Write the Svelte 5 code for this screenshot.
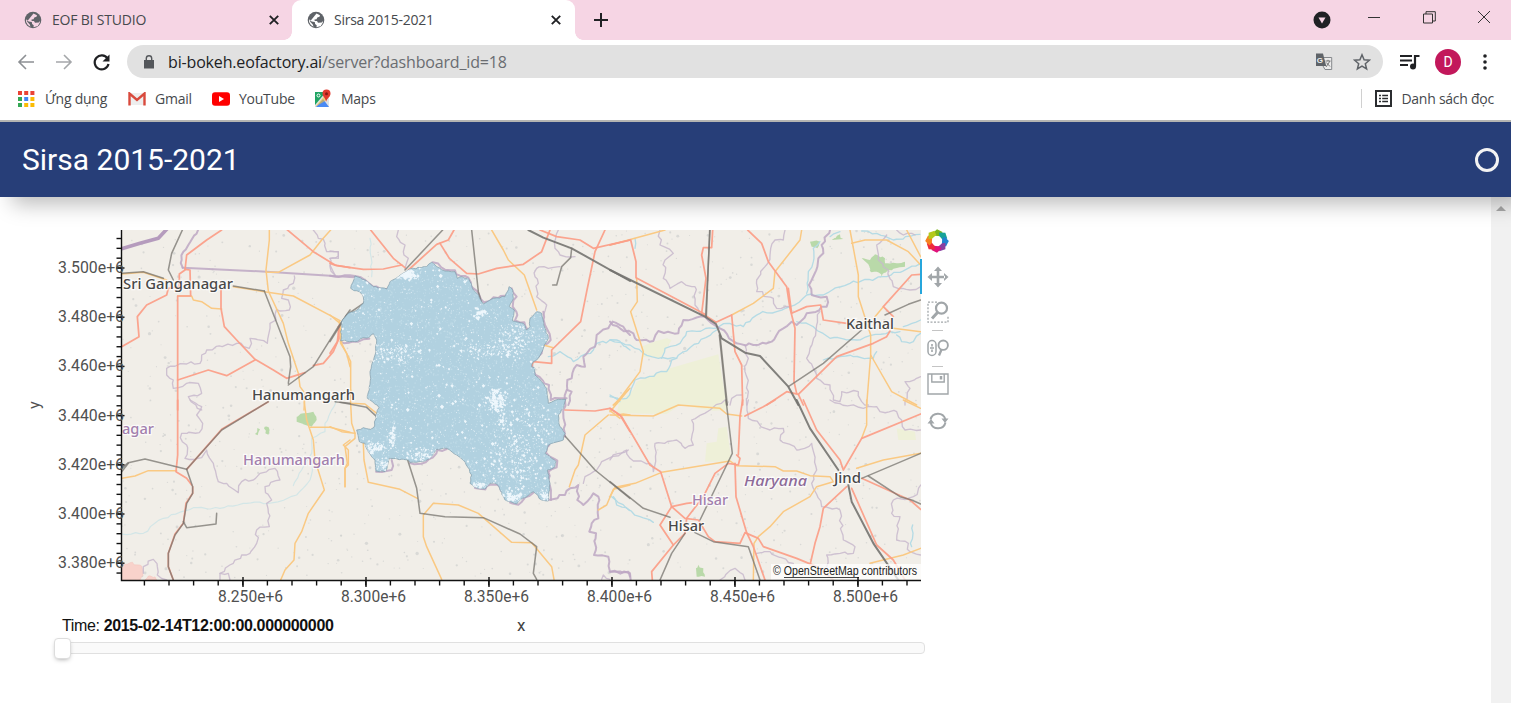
<script>
  let seed = 7;
  function rnd() {
    seed = (seed * 16807) % 2147483647;
    return seed / 2147483647;
  }

  // Breaks each segment into short jittered pieces, for borders and rivers.
  function rough(d, amp, step = 14) {
    const pts = d.split(' ').map((s) => s.split(',').map(Number));
    const out = [pts[0]];
    for (let i = 1; i < pts.length; i++) {
      const [x0, y0] = pts[i - 1];
      const [x1, y1] = pts[i];
      const n = Math.max(1, Math.round(Math.hypot(x1 - x0, y1 - y0) / step));
      for (let j = 1; j < n; j++) {
        out.push([
          x0 + ((x1 - x0) * j) / n + (rnd() - 0.5) * amp,
          y0 + ((y1 - y0) * j) / n + (rnd() - 0.5) * amp
        ]);
      }
      out.push([x1, y1]);
    }
    return out.map((p) => p[0].toFixed(1) + ',' + p[1].toFixed(1)).join(' ');
  }

  const order = ['area', 'park', 'town', 'stream', 'water', 'border', 'strong', 'state', 'minor', 'major', 'rail', 'main'];
  const tiles = [
    { x: 20, y: 220, l: {
      state: ['305,86 360,70 415,55 440,28'],
      rail: ['488,28 455,100 445,150 460,180', '733,213 810,410 812,440 805,490', '990,270 955,320 880,440 805,495', '945,545 990,550', '305,160 370,155 430,175', '640,198 733,213'],
      strong: ['535,28 505,75 490,95 485,120 488,143', '488,143 740,155 990,171 1005,172'],
      border: ['880,30 895,55 915,70 920,95 955,95 955,108 930,115 930,140 945,165', '823,168 820,190 790,210 785,235 805,240 808,270 770,268 768,300 750,310 742,370 690,355 688,385 650,370 560,390 545,405 540,430 500,432 440,445 440,465 460,480 460,505 500,490 535,490 545,520 505,530 545,570'],
      major: ['605,30 560,60 500,105 495,150 478,162 478,200 445,205 440,225 380,255 352,290 357,350 305,380', '495,148 510,150 512,228 473,228 473,570', '603,205 603,265 613,320 650,360 705,418 760,450 800,475 855,458', '473,480 565,450 620,467 705,420', '800,28 880,95 945,135 990,143', '880,437 910,430 940,395 957,355 955,320'],
      minor: ['473,228 515,228 520,240 545,245 575,265 605,267', '305,162 370,157 440,180', '640,200 733,215 820,228 960,302', '748,28 748,60 738,150 745,213 790,310 805,370 835,460 840,500 855,520 852,570', '738,157 775,157 870,105 905,60 932,30', '958,302 962,370 980,400 990,440']
    } },
    { x: 20, y: 400, l: {
      border: ['510,0 545,20 530,45 548,70 538,98 485,100 487,125 500,135 495,175 545,173 560,150 580,190 595,245 620,250 655,278 665,245 700,240 720,220 765,205 780,240 735,260 755,300 740,310 748,380 710,390 710,430 690,460 665,465 640,490 600,520 600,540', '600,520 625,520 630,540', '370,520 370,500 400,478 412,500 412,525 440,540'],
      major: ['473,0 473,165 468,215 500,235 515,255', '745,5 605,88 500,208', '518,260 518,280 498,310 490,370 465,402 445,460 445,500 460,540'],
      rail: ['745,5 605,90 500,208 518,260 518,280 500,310 490,370 465,405 445,460 445,500 460,540', '305,205 325,188 375,177 500,208', '305,215 325,190', '490,365 500,383 588,372 590,340'],
      minor: ['305,235 345,228 385,212 470,212', '852,0 860,60 880,120 885,180 913,270 865,340 845,395 825,430 822,480 795,510 782,540', '870,82 930,82 990,97', '990,120 970,135 985,150 985,195 975,205 975,260'],
      stream: ['950,0 915,70 915,95 875,115 875,160 845,210 820,257', '305,402 370,400 430,355 520,323 600,325 680,310 760,308 830,285 870,240 880,180'],
      park: ['830,50 850,40 880,35 890,60 875,80 830,65', '705,102 712,84 720,88 713,106', '736,100 734,80 746,82 745,104'],
      town: ['305,495 330,488 360,495 368,515 360,540 305,540', '375,540 385,528 405,530 410,540']
    } },
    { x: 330, y: 225, l: {
      major: ['122,15 190,100 225,128', '0,115 20,122 100,133 160,132 215,120', '372,15 355,45 320,58 235,135', '330,55 358,100 410,145 445,147 500,130 580,118 635,80 660,15', '630,15 680,35 750,45 790,70 900,45', '825,15 795,80 772,190 752,290 665,375 665,415 610,410 603,430', '28,300 22,350 0,385'],
      rail: ['338,15 225,135', '425,15 445,200 455,235', '725,70 722,98 695,125 680,180 668,180', '100,235 50,270 0,350'],
      main: ['595,15 640,38 725,70 900,168'],
      minor: ['485,15 520,75 535,105 583,150 620,255', '0,270 30,295 35,355 62,410 62,520', '900,490 850,540', '640,360 670,368'],
      border: ['205,15 200,35 225,60 220,80 235,100 225,130', '685,15 675,70 690,90 735,95', '690,125 655,130 620,130 615,155 625,175 620,215 650,240 640,270', '0,100 25,100 25,80 0,78', '0,120 15,150'],
      strong: ['0,152 75,153 105,165 130,185 170,192', '308,112 345,134 375,136 390,152 415,158 430,190 447,208 462,232 490,217 525,212', '545,190 560,215 548,245 562,270 555,286 583,292 592,313', '640,260 645,300 662,345 637,365 635,385 605,410 617,450 657,480 662,525 710,520', '900,330 880,305 848,290 835,310 800,330 795,365 760,395 765,425 740,420 725,460 712,465 712,495 725,500 715,540', '32,350 58,353 85,350 118,341'],
      stream: ['120,40 125,155'],
      water: ['655,395 690,380 730,410 790,375 800,355 860,345 900,375', '840,510 870,530']
    } },
    { x: 330, y: 390, l: {
      rail: ['30,37 110,52 140,80', '233,210 260,295 270,370 345,380 460,383 570,432 620,470 610,550 620,568', '705,138 795,240 900,325'],
      minor: ['62,0 62,40 105,42 140,70', '62,40 65,100 75,130 75,145 45,170 52,220 45,235 45,290', '0,110 35,125 75,130', '100,160 102,210 115,277 210,298 262,325', '335,568 290,470 280,440 280,375 310,340 385,345 445,370 545,457 605,458 665,530 672,568', '840,65 895,0', '840,62 870,85', '835,75 765,135 745,225 735,240 718,290', '860,75 880,72 900,75', '805,360 830,345 850,298 900,285'],
      major: ['705,60 795,63 840,55 870,75 900,125'],
      strong: ['655,330 705,315 720,295 745,285 742,330 760,345 790,310 805,320 805,385 785,400 778,425 798,430 792,495 835,500 840,545 895,545 900,560', '710,0 700,75 705,140', '138,245 185,240 185,210', '240,219 287,217 308,203 322,180 350,177', '435,294 466,298 482,284 502,284 513,302', '540,338 565,344 610,308', '658,165 648,188 682,212 680,232 655,245 663,330'],
      border: ['760,280 765,260 800,240 815,215 895,180', '815,568 820,555 840,568'],
      water: ['850,320 860,345 900,362']
    } },
    { x: 610, y: 225, l: {
      area: ['80,470 180,430 325,388 350,540 15,540 70,495', '95,365 130,350 170,340 185,345 150,400 98,395'],
      main: ['0,135 285,275 318,297 335,340 405,383 450,393 535,485 565,540'],
      rail: ['300,15 287,275', '299,15 289,275', '328,330 350,540', '330,330 352,540', '535,485 640,415 755,315', '825,270 895,238 932,225'],
      major: ['0,60 62,45 78,110 78,158 285,268', '308,15 305,68 280,68 275,90 288,160 275,265 318,292 365,270 375,380 395,420 398,540', '413,15 455,55 475,110 530,185 540,250 555,310 552,470 560,505', '535,190 545,265 590,245 632,240 640,285 710,295', '932,148 905,150 820,245 850,275', '840,318 830,335 790,355 680,395 565,508', '470,540 530,500 565,508 580,540'],
      minor: ['0,60 165,15', '80,160 82,230 62,260 100,380 90,440 15,540', '575,15 570,45 495,140 490,190 430,235 365,270', '720,15 745,150 745,215 782,330 782,390 770,540', '725,55 765,45 830,45 895,80 932,120', '890,15 932,95', '850,310 932,320', '782,390 845,500 920,540', '795,275 820,245'],
      strong: ['0,290 30,310 70,325 80,345 130,348 145,318 205,325 220,285 285,275 330,310 380,355 430,360 485,350 520,310 545,290 560,300 590,265 650,245 650,215 605,210 597,180 612,150 625,100 640,85 635,60 660,15'],
      border: ['150,15 150,60 190,85 165,105 160,160 180,190 215,170 255,185 255,240 270,265', '525,15 520,45 495,45 480,90 465,125 440,165 440,200 490,220 500,250 540,245', '630,260 620,300 600,370 590,400 610,430 620,460 660,480 670,525 690,530 695,500 745,500 755,530 775,540', '405,360 415,400 405,440 415,500 410,540', '830,30 800,60 805,105 835,135 850,185 900,195 932,185', '932,455 885,470 900,490 885,540', '860,15 880,30 915,30', '360,540 365,520 395,510'],
      water: ['0,345 60,360 100,385 145,400 200,400', '155,400 165,370 210,355 230,320 310,310 350,295 400,305 450,265 500,260 540,245 590,210 640,210 720,175 830,155 932,115', '0,515 50,520 75,465 170,440 185,405 320,315', '560,290 600,300 660,340 740,345 840,320 870,320', '640,405 690,395 730,395 790,400 800,380', '860,330 875,350 910,350 932,325', '75,40 75,70', '630,50 610,70 610,110 595,140 590,205', '755,18 800,25 850,45 930,28', '660,35 690,20', '880,305 932,285'],
      park: ['755,100 780,105 795,88 825,100 825,115 865,115 885,110 885,125 835,135 815,155 800,140 780,138 775,118', '600,50 630,50 622,70 605,65', '665,45 690,28 700,42']
    } },
    { x: 610, y: 400, l: {
      area: ['30,0 350,0 355,30 310,32 210,15 170,42 20,40', '290,130 320,125 325,85 350,80 365,185 285,185', '860,85 915,95 918,120 865,120'],
      major: ['0,25 35,50 120,195 152,215 185,320 150,375 190,435 125,515 127,540', '185,320 230,310 250,308', '185,320 225,355 265,360 295,410 315,425 390,430 405,398 445,415 460,440 560,475 620,500 670,540', '398,0 390,50 385,165', '380,165 390,175 385,195 355,190 315,220 280,290 230,355 225,400 190,435', '375,190 378,290 410,398 430,440 465,540', '405,48 430,35 460,20 495,0', '580,0 620,90 690,180 700,210 755,115 932,42', '710,260 640,325 630,380 615,430 600,495', '725,265 800,435 850,480 885,540', '755,235 900,300 932,328'],
      minor: ['0,45 130,48 205,15 330,25 350,42 395,48', '0,290 15,262 75,250 155,217 360,183 380,197 495,200 520,213 560,213 600,227 660,230 670,245 620,260 600,290 520,335 480,380 445,410 432,430 430,540', '770,0 770,75 755,115', '740,205 820,180 932,160', '932,445 880,465 780,490', '10,15 30,0', '880,0 932,25'],
      rail: ['348,0 367,160 350,195 270,360', '0,245 100,325 180,352', '255,398 310,425 415,440 450,540', '225,400 185,460 150,540', '755,235 932,160', '775,228 870,290 905,300 932,312'],
      main: ['560,0 600,85 685,210', '715,255 725,305 790,430 865,540'],
      border: ['0,180 50,150 60,175 120,190 130,215 135,130 200,120 225,145 250,135 245,60 300,30 345,0', '415,0 415,55 480,90 520,85 510,120 560,150 605,130 620,210 605,250 635,320 690,330 700,420 735,440 730,460 650,465 650,500', '660,0 760,25 800,20 810,35 860,35 885,90 932,90', '932,255 910,290 850,300 845,340 870,350 860,420 895,430 900,455 932,465', '440,460 480,455 550,490', '330,540 375,505 405,540'],
      strong: ['0,515 60,520 62,540'],
      water: ['5,290 45,320 90,350 130,367', '908,375 905,440'],
      park: ['258,505 265,494 280,505 285,530 260,530']
    } }
  ];

  const jitter = { border: [11], strong: [9], water: [9], stream: [6], park: [7, 8], town: [7, 8] };
  const layers = order.map((kind) => ({
    kind,
    items: tiles.flatMap((t) => (t.l[kind] || []).map((d) => ({
      t: `translate(${t.x} ${t.y}) scale(.33333)`,
      fill: ['area', 'park', 'town'].includes(kind),
      d: jitter[kind] && !d.startsWith('488,143') ? rough(d, ...jitter[kind]) : d
    })))
  }));

  const district = rough('75,153 62,190 72,197 88,200 98,210 100,235 80,255 55,265 35,290 32,348 45,345 58,350 85,348 100,338 118,337 130,326 140,345 135,390 120,440 122,460 112,520 120,525 147,548 140,565 132,607 122,613 100,608 80,615 88,650 105,655 115,680 135,705 138,738 165,740 172,725 178,700 235,705 240,712 285,708 305,695 320,673 350,670 380,690 405,710 425,750 420,775 435,787 465,792 480,775 500,777 510,795 525,825 560,837 570,825 610,800 635,825 655,828 660,775 652,735 675,725 678,710 645,685 655,660 700,645 705,625 690,605 685,570 700,550 707,523 685,523 655,535 650,490 635,470 615,450 615,430 605,425 610,410 625,400 640,370 650,350 655,340 645,310 635,265 620,260 600,280 600,305 588,315 580,295 548,288 553,255 538,245 550,220 548,195 537,185 525,215 490,220 460,237 445,210 430,195 415,160 395,155 382,160 375,140 345,138 320,125 305,112 290,125 240,132 205,155 180,170 170,192 130,185 105,165 75,153', 4, 9);

  const dots = Array.from({ length: 1000 }, () => [122 + rnd() * 798, 231 + rnd() * 348, 0.5 + rnd() * rnd() * 1.3]);

  const specks = [];
  const grain = [];
  function scatter(n, cx, cy, sx, sy, size) {
    for (let i = 0; i < n; i++) {
      const gx = rnd() + rnd() + rnd() - 1.5;
      const gy = rnd() + rnd() + rnd() - 1.5;
      specks.push([cx + gx * sx, cy + gy * sy, 0.8 + rnd() * rnd() * size]);
    }
  }
  for (let i = 0; i < 420; i++) specks.push([30 + rnd() * 680, 110 + rnd() * 730, 1.8 + rnd() * rnd() * 4.5]);
  for (let i = 0; i < 1300; i++) specks.push([30 + rnd() * 680, 110 + rnd() * 730, 0.8 + rnd() * 1.2]);
  for (let i = 0; i < 4000; i++) grain.push([30 + rnd() * 680, 110 + rnd() * 730, 1 + rnd() * 2]);
  scatter(130, 230, 150, 28, 14, 6);
  scatter(50, 450, 265, 16, 12, 7);
  scatter(170, 190, 385, 75, 36, 4.5);
  scatter(110, 500, 530, 30, 26, 7);
  scatter(50, 490, 515, 10, 30, 6);
  scatter(70, 520, 590, 22, 34, 4);
  scatter(80, 187, 635, 12, 34, 5);
  scatter(110, 135, 668, 34, 16, 5);
  scatter(60, 155, 715, 20, 20, 5);
  scatter(130, 275, 690, 60, 20, 4.5);
  scatter(340, 550, 720, 95, 95, 4.5);
  scatter(110, 545, 818, 34, 14, 6);
  scatter(60, 645, 812, 14, 18, 5);
  scatter(70, 445, 780, 26, 10, 5);
  scatter(150, 570, 330, 60, 40, 4);
  scatter(170, 490, 375, 100, 24, 4);
  scatter(120, 610, 620, 70, 70, 4.5);
  const toPath = (list) => list.map(([x, y, r]) => `M${(x - r).toFixed(1)} ${y.toFixed(1)}l${r.toFixed(1)} ${(-r).toFixed(1)} ${(r * 1.1).toFixed(1)} ${r.toFixed(1)} ${(-r).toFixed(1)} ${(r * 1.2).toFixed(1)}z`).join('');
  const speckPath = toPath(specks);
  const grainPath = toPath(grain);

  const xTicks = Array.from({ length: 32 }, (_, i) => 144.4 + i * 24.6).filter((x) => x < 915);
  const yTicks = Array.from({ length: 35 }, (_, i) => 238.5 + i * 9.84).filter((y) => y < 578);
  const xMajor = ['8.250e+6', '8.300e+6', '8.350e+6', '8.400e+6', '8.450e+6', '8.500e+6'].map((t, i) => ({ t, x: 243 + i * 123 }));
  const yMajor = ['3.500e+6', '3.480e+6', '3.460e+6', '3.440e+6', '3.420e+6', '3.400e+6', '3.380e+6'].map((t, i) => ({ t, y: 268 + i * 49.2 }));

  const places = [
    { t: 'agar', x: 122, y: 434, w: 32, c: 'soft' },
    { t: 'Hanumangarh', x: 243, y: 465, w: 102, c: 'soft' },
    { t: 'Hisar', x: 692, y: 504.5, w: 36, c: 'soft' },
    { t: 'Haryana', x: 744, y: 485.5, w: 63, c: 'region' },
    { t: 'Sri Ganganagar', x: 123, y: 288.5, w: 110, c: 'city' },
    { t: 'Hanumangarh', x: 252, y: 399.5, w: 103, c: 'city' },
    { t: 'Kaithal', x: 846, y: 328.5, w: 48, c: 'city' },
    { t: 'Jind', x: 834, y: 483, w: 27, c: 'city' },
    { t: 'Hisar', x: 668, y: 531, w: 36, c: 'city' }
  ];

  const petals = ['#7ab51d', '#17a398', '#2183d0', '#8a3fa0', '#e0127a', '#ee2b3b', '#f5821f', '#b5c91c'];
  const appColors = ['#ea4335', '#ea4335', '#ea4335', '#34a853', '#4285f4', '#fbbc05', '#34a853', '#fbbc05', '#fbbc05'];
</script>

{#snippet globe(bg)}
  <svg class="globe" viewBox="0 0 18 18" width="18" height="18">
    <circle cx="9" cy="9" r="8.3" fill="#5f6368" />
    <path d="M9.500 2.500 13 4.200l-.5 1.600-2.200.7-.8 1.700-2 .3.2 1.400 2.300.2 1 1.700 3.800-.3.500-1.500.6 1.500-2.100 3.500-4.300 1.300.2-2-1.600-1.200-.3-2-3.200-.6L2.200 8.200l-.1 2.800 1.800 3 2.600 1.700-.7-2.200L3 10.500" fill={bg} />
  </svg>
{/snippet}
{#snippet cross()}
  <svg width="10" height="10" viewBox="0 0 10 10"><path d="M.8.8l8.400 8.400M9.200.8.8 9.200" stroke="#202124" stroke-width="1.900" fill="none" /></svg>
{/snippet}

<div class="window">
  <div class="tabs">
    <div class="tab idle">
      {@render globe('#f6d5e4')}
      <span class="t1">EOF BI STUDIO</span>
      {@render cross()}
    </div>
    <div class="tab active">
      {@render globe('#fff')}
      <span class="t2">Sirsa 2015-2021</span>
      {@render cross()}
    </div>
    <svg class="plus" width="14" height="14" viewBox="0 0 14 14"><path d="M7 0v14M0 7h14" stroke="#202124" stroke-width="2" /></svg>
    <div class="controls">
      <svg width="18" height="18" viewBox="0 0 18 18"><circle cx="9" cy="9" r="8.500" fill="#202124" /><path d="M5.500 6.500h7L9 12.500z" fill="#f6d5e4" /></svg>
      <svg width="12" height="12" viewBox="0 0 12 12"><path d="M0 6.500h12" stroke="#333" /></svg>
      <svg width="13" height="13" viewBox="0 0 13 13" fill="none" stroke="#333"><path d="M.5 3h9v9h-9zM3 3V.7h9.300v9.300H9.500" /></svg>
      <svg width="12" height="12" viewBox="0 0 12 12"><path d="M0 0l12 12M12 0 0 12" stroke="#333" /></svg>
    </div>
  </div>

  <div class="address">
    <svg class="nav" width="96" height="20" viewBox="0 0 96 20" fill="none">
      <path d="M17 10H2M9 3l-7 7 7 7" stroke="#8d9094" stroke-width="1.600" />
      <path d="M39 10h15M47 3l7 7-7 7" stroke="#a5a7aa" stroke-width="1.600" />
      <path d="M90.500 6.500A7 7 0 1 0 91.500 12" stroke="#202124" stroke-width="2.200" /><path d="M92.500 2.500v7h-7z" fill="#202124" />
    </svg>
    <div class="omnibox">
      <svg width="10" height="14" viewBox="0 0 10 14"><path d="M0 5h10v8.500H0z" fill="#54575b" /><path d="M2.300 5V3.400a2.700 2.700 0 0 1 5.400 0V5" fill="none" stroke="#54575b" stroke-width="1.400" /></svg>
      <span class="url">bi-bokeh.eofactory.ai<i>/server?dashboard_id=18</i></span>
      <svg width="18" height="18" viewBox="0 0 18 18">
        <path d="M8 4.500h8.700v12H10L8 13" fill="#ececec" stroke="#85888c" /><path d="M1 .5h7l3.200 12.500H1z" fill="#5f6368" />
        <text x="1.800" y="9.700" class="g">G</text><path d="M10.500 8h5M13 6.800V8M11 14l4-6M11.300 9.500l3.700 4" fill="none" stroke="#777" />
      </svg>
      <svg width="18" height="18" viewBox="0 0 18 18"><path d="M9 1.800l2.100 5 5.300.4-4.100 3.500 1.300 5.200L9 13.100l-4.600 2.800 1.300-5.200-4.100-3.500 5.300-.4z" fill="none" stroke="#5f6368" stroke-width="1.500" /></svg>
    </div>
    <svg class="queue" width="20" height="16" viewBox="0 0 20 16"><path d="M0 2h12M0 6.500h12M0 11h8" stroke="#202124" stroke-width="1.900" /><path d="M15 12.500V2h4.500" stroke="#202124" stroke-width="2.200" fill="none" /><circle cx="13" cy="12.400" r="3" fill="#202124" /></svg>
    <div class="avatar">D</div>
    <svg width="4" height="16" viewBox="0 0 4 16" fill="#202124"><circle cx="2" cy="2" r="1.800" /><circle cx="2" cy="8" r="1.800" /><circle cx="2" cy="14" r="1.800" /></svg>
  </div>

  <div class="bookmarks">
    <svg class="b0" width="17" height="16" viewBox="0 0 17 16">
      {#each appColors as c, i}<rect x={(i % 3) * 6.2} y={Math.floor(i / 3) * 6} width="4" height="4" fill={c} />{/each}
    </svg>
    <span class="w0">Ứng dụng</span>
    <svg width="18" height="14" viewBox="0 0 18 14"><path d="M1 1h16v12H1z" fill="#eee" /><path d="M1.500 13.500V1.500L9 8l7.500-6.500v12" fill="none" stroke="#d94a3d" stroke-width="2.400" /></svg>
    <span class="w1">Gmail</span>
    <svg width="18" height="14" viewBox="0 0 18 14"><rect width="18" height="13.500" rx="3" y=".2" fill="#f00" /><path d="M7 4l5 3-5 3z" fill="#fff" /></svg>
    <span class="w2">YouTube</span>
    <svg width="18" height="20" viewBox="0 0 18 20">
      <path d="M1 3h14v15H1z" fill="#dfe3e6" /><path d="M1 3h11L1 16z" fill="#1fa463" /><path d="M2 18l7-8 6 8z" fill="#4a8af4" /><path d="M1 18 13 4l3 3-5 5z" fill="#fbc02d" opacity=".6" /><path d="M12 13c0-4-3.500-5-3.500-8.500a4 4 0 0 1 8 0C16.500 8 13 9 12 13z" fill="#e0392e" /><circle cx="12.500" cy="4.700" r="1.500" fill="#8a1a12" /><circle cx="4.500" cy="6.500" r="1.500" fill="none" stroke="#fff" />
    </svg>
    <span class="w3">Maps</span>
    <div class="reading">
      <svg width="17" height="17" viewBox="0 0 17 17"><path d="M1 1h15v15H1z" fill="none" stroke="#2b2d30" stroke-width="2" /><path d="M4 5.500h2M4 8.500h2M4 11.500h2M7.200 5.500H13M7.200 8.500H13M7.200 11.500H13" stroke="#2b2d30" stroke-width="1.600" /></svg>
      <span>Danh sách đọc</span>
    </div>
  </div>

  <header><h1>Sirsa 2015-2021</h1><div class="ring"></div></header>

  <main>
    <div class="content">
      <div class="figure">
        <svg class="plot" width="901" height="385" viewBox="20 225 901 385">
          <defs>
            <clipPath id="frame"><rect x="122" y="230" width="799" height="350" /></clipPath>
            <clipPath id="shape"><polygon points={district} /></clipPath>
          </defs>
          <g clip-path="url(#frame)">
            <rect x="122" y="230" width="799" height="350" fill="#f1eee8" />
            {#each dots as [x, y, r]}<circle cx={x} cy={y} {r} fill="#cfd0cf" opacity=".7" />{/each}
            {#each layers as layer}
              <g class={layer.kind}>
                {#each layer.items as p}
                  {#if p.fill}<polygon points={p.d} transform={p.t} />{:else}<polyline points={p.d} transform={p.t} />{/if}
                {/each}
              </g>
            {/each}
            <g transform="translate(330 225) scale(.33333)">
              <polygon points={district} fill="#b1d1e0" stroke="#7c98a8" stroke-width="2" />
              <path d={grainPath} fill="#d3e8f1" opacity=".45" clip-path="url(#shape)" />
              <path d={speckPath} fill="#f3fafe" opacity=".92" clip-path="url(#shape)" />
            </g>
            {#each places as p}<text class={p.c} x={p.x} y={p.y} textLength={p.w} lengthAdjust="spacingAndGlyphs">{p.t}</text>{/each}
            <rect x="771" y="564" width="150" height="16" fill="#fff" opacity=".75" />
            <text class="credit" x="773" y="575" textLength="144" lengthAdjust="spacingAndGlyphs">© OpenStreetMap contributors</text>
            <path d="M784 577.500h75" stroke="#444" />
          </g>
          <g class="axis">
            <path d="M121.500 230v350.500H921" />
            {#each xTicks as x}<path d="M{x} 580v5.500" />{/each}
            {#each yTicks as y}<path d="M116.500 {y}h5" />{/each}
            {#each xMajor as m}<path d="M{m.x} 577v10" /><text x={m.x - 25} y="602" textLength="65" lengthAdjust="spacingAndGlyphs">{m.t}</text>{/each}
            {#each yMajor as m}<path d="M116 {m.y}h8.500" /><text x="58" y={m.y + 5} textLength="66" lengthAdjust="spacingAndGlyphs">{m.t}</text>{/each}
            <text class="ylab" transform="translate(39.500 409) rotate(-90)">y</text>
          </g>
        </svg>
        <div class="tools">
          <svg class="logo" width="24" height="24" viewBox="-12 -12 24 24">
            {#each petals as c, i}<path d="M-4.500 -7.500 0 -11.800 5.500 -9 3.800 -4.800 -2 -5.200z" fill={c} transform="rotate({i * 45})" />{/each}
          </svg>
          <div class="tool on">
            <svg width="22" height="22" viewBox="0 0 22 22" fill="#a1a6a9"><path d="M9.700 4h2.600v14H9.700zM4 9.700h14v2.600H4zM11 .5l4 4.500H7zM11 21.500 7 17h8zM.5 11 5 7v8zM21.500 11 17 7v8z" /></svg>
          </div>
          <div class="tool">
            <svg width="22" height="22" viewBox="0 0 22 22" fill="none" stroke="#a1a6a9"><path d="M10 1.200H1v20h20V15" stroke-width="1.300" stroke-dasharray="2 1.500" /><circle cx="14.500" cy="7.200" r="5.500" stroke-width="2.200" /><path d="M10.500 11.500 5 17.500" stroke-width="3" /></svg>
          </div>
          <div class="tool">
            <svg width="22" height="18" viewBox="0 0 22 18" fill="none" stroke="#a1a6a9"><rect x="1" y="1.500" width="8" height="15" rx="4" stroke-width="1.500" /><path d="M5 5v2.500M3 9h4M5 10.500v2.500" stroke-width="1.600" /><circle cx="16.200" cy="6.200" r="4.700" stroke-width="1.900" /><path d="M14.500 10.500 12 16.500" stroke-width="2.300" /></svg>
          </div>
          <div class="tool">
            <svg width="22" height="22" viewBox="0 0 22 22" fill="none" stroke="#a1a6a9" stroke-width="1.400"><path d="M1 1h20v20H1zM4.800 1v8h12.400V1" /><path d="M14 3v3.500" stroke-width="2.500" /></svg>
          </div>
          <div class="tool">
            <svg width="22" height="20" viewBox="0 0 22 20" fill="none" stroke="#a1a6a9" stroke-width="2"><path d="M3.500 8.500A7.700 7.700 0 0 1 18.300 8M18.500 11.500A7.700 7.700 0 0 1 3.700 12" /><path d="M14.500 7.500h7L18 12zM.5 12.500h7L4 8z" fill="#a1a6a9" stroke="none" /></svg>
          </div>
        </div>
      </div>
      <div class="readout"><span class="time">Time: <b>2015-02-14T12:00:00.000000000</b></span><span class="xlab">x</span></div>
      <div class="slider"><div class="handle"></div></div>
    </div>
    <div class="scroll"><div class="up"></div></div>
  </main>
</div>

<style>
  :global(body) { background: #fff; overflow: hidden; }
  .window { width: 1511px; height: 703px; display: flex; flex-direction: column; overflow: hidden; font-family: 'Open Sans', 'Noto Sans', sans-serif; color: #46494d; }
  svg { display: block; flex: none; }
  span { white-space: nowrap; }
  .tabs { height: 40px; flex: none; background: #f6d5e4; display: flex; align-items: center; }
  .tab { height: 40px; display: flex; align-items: center; box-sizing: border-box; font-size: 14px; }
  .idle { width: 292px; padding: 0 13px 0 24px; }
  .active { width: 283px; padding: 0 14px 0 15px; background: #fff; border-radius: 9px 9px 0 0; position: relative; }
  .active::before, .active::after { content: ''; position: absolute; bottom: 0; width: 8px; height: 8px; }
  .active::before { left: -8px; background: radial-gradient(circle at 0 0, #f6d5e4 7.500px, #fff 8px); }
  .active::after { right: -8px; background: radial-gradient(circle at 100% 0, #f6d5e4 7.500px, #fff 8px); }
  .tab span { flex: 1; margin-left: 10px; padding-bottom: 2px; }
  .t1 { letter-spacing: -.2px; }
  .t2 { letter-spacing: -.25px; }
  .active span { margin-left: 9px; }
  .plus { margin-left: 19px; }
  .controls { margin-left: auto; display: flex; align-items: center; padding-right: 21px; }
  .controls svg { margin-left: 42px; margin-bottom: 6px; }
  .controls svg:first-child { margin-bottom: 0; }
  .controls svg:nth-child(2) { margin-left: 37px; margin-right: 1px; }
  .address { height: 43px; flex: none; display: flex; align-items: center; }
  .nav { margin-left: 17px; width: 96px; }
  .omnibox { width: 1256px; height: 33px; margin-left: 14px; background: #e1e1e1; border-radius: 17px; display: flex; align-items: center; box-sizing: border-box; padding: 0 12px 0 17px; }
  .url { flex: 1; margin-left: 14px; font-size: 16px; color: #202124; letter-spacing: -.16px; }
  .url i { font-style: normal; color: #6a6d71; }
  .omnibox svg:last-child { margin-left: 20px; }
  .g { font: bold 8px 'Liberation Sans', sans-serif; fill: #eee; }
  .queue { margin-left: 17px; }
  .avatar { width: 26px; height: 26px; margin: 0 22px 0 15px; border-radius: 50%; background: #c2185b; color: #fff; font: 14px/26px Roboto, sans-serif; text-align: center; }
  .bookmarks { height: 39px; flex: none; display: flex; align-items: center; font-size: 14px; border-bottom: 2px solid #b4b4b2; box-sizing: border-box; padding-bottom: 6px; }
  .bookmarks span { margin-left: 9px; letter-spacing: -.25px; box-sizing: border-box; }
  .b0 { margin-left: 18px; }
  .bookmarks .w0 { width: 83px; margin-left: 10px; }
  .w1 { width: 57px; }
  .w2 { width: 75px; }
  .reading { margin-left: auto; margin-right: 17px; padding-left: 13px; height: 19px; border-left: 1px solid #d0d0d0; display: flex; align-items: center; }
  header { height: 75px; flex: none; background: #273e78; display: flex; align-items: center; justify-content: space-between; padding: 0 12px 0 22px; position: relative; z-index: 2; box-shadow: 12px 7px 20px rgba(0, 0, 0, .27); clip-path: inset(0 0 -40px 0); }
  h1 { margin: 0; font: 400 30px Roboto, sans-serif; color: #fff; }
  .ring { width: 18px; height: 18px; border: 3px solid #f3f3f3; border-radius: 50%; }
  main { flex: 1; display: flex; justify-content: space-between; min-height: 0; }
  .content { padding: 28px 0 0 20px; width: 940px; }
  .figure { display: flex; height: 385px; }
  .tools { width: 34px; margin-left: -1px; display: flex; flex-direction: column; align-items: center; padding-top: 4px; }
  .logo { margin-bottom: 6px; }
  .tool { position: relative; height: 36.200px; width: 34px; padding-left: 1px; display: flex; align-items: center; justify-content: center; box-sizing: border-box; }
  .on { box-shadow: inset 2px 0 #26a6dc; height: 35px; }
  .tool:nth-child(4)::before, .tool:nth-child(5)::before { content: ''; position: absolute; top: 0; width: 11px; height: 1px; background: #c4c4c4; }
  .area { fill: #eef0d8; }
  .park { fill: #b9d9a9; }
  .town { fill: #f8d2cb; stroke: #f4b6ad; }
  polyline { fill: none; stroke-linejoin: round; stroke-linecap: round; }
  .stream polyline { stroke: #d3e6e7; stroke-width: 3.500; }
  .water polyline { stroke: #b5dbe5; stroke-width: 4; }
  .border polyline { stroke: #c8b9cc; stroke-width: 4; opacity: .85; }
  .strong polyline { stroke: #bda7c3; stroke-width: 6; opacity: .85; }
  .state polyline { stroke: #b59bbd; stroke-width: 11; }
  .minor polyline { stroke: #fac983; stroke-width: 4.500; }
  .major polyline { stroke: #fb9f89; stroke-width: 5.200; opacity: .95; }
  .rail polyline { stroke: #77746f; stroke-width: 4.600; opacity: .75; }
  .main polyline { stroke: #747370; stroke-width: 6; opacity: .9; }
  text { font: 15px 'Noto Sans', sans-serif; }
  .city, .soft, .region { paint-order: stroke; stroke: rgba(255, 255, 255, .75); stroke-width: 2.500px; fill: #484848; font-weight: 500; }
  .soft { fill: #a27fad; }
  .region { fill: #8d6b98; font-style: italic; }
  .credit { font: 12px 'Liberation Sans', sans-serif; fill: #222; }
  .axis path { fill: none; stroke: #111; stroke-width: 1.400; }
  .axis text { font: 16px Roboto, sans-serif; fill: #505050; }
  .axis .ylab { font-size: 16.500px; }
  .readout { display: flex; height: 30px; align-items: center; font: 16px 'Liberation Sans', sans-serif; color: #111; }
  .time { margin-left: 42px; width: 455px; letter-spacing: -.36px; padding-top: 2px; }
  .xlab { font: 17px Roboto, sans-serif; color: #444; }
  .slider { margin: 2px 0 0 35px; width: 868px; height: 10px; border: 1px solid #e0e0e0; border-radius: 4px; background: #fafafa; position: relative; }
  .handle { position: absolute; left: -2px; top: -5px; width: 15px; height: 19px; border: 1px solid #ddd; border-radius: 4px; background: #fff; box-shadow: 0 2px 5px -2px #999; }
  .scroll { width: 20px; background: #f1f1f1; }
  .up { width: 0; margin: 9px auto; border: 5px solid transparent; border-top: 0; border-bottom: 5px solid #a8a8a8; }
</style>
